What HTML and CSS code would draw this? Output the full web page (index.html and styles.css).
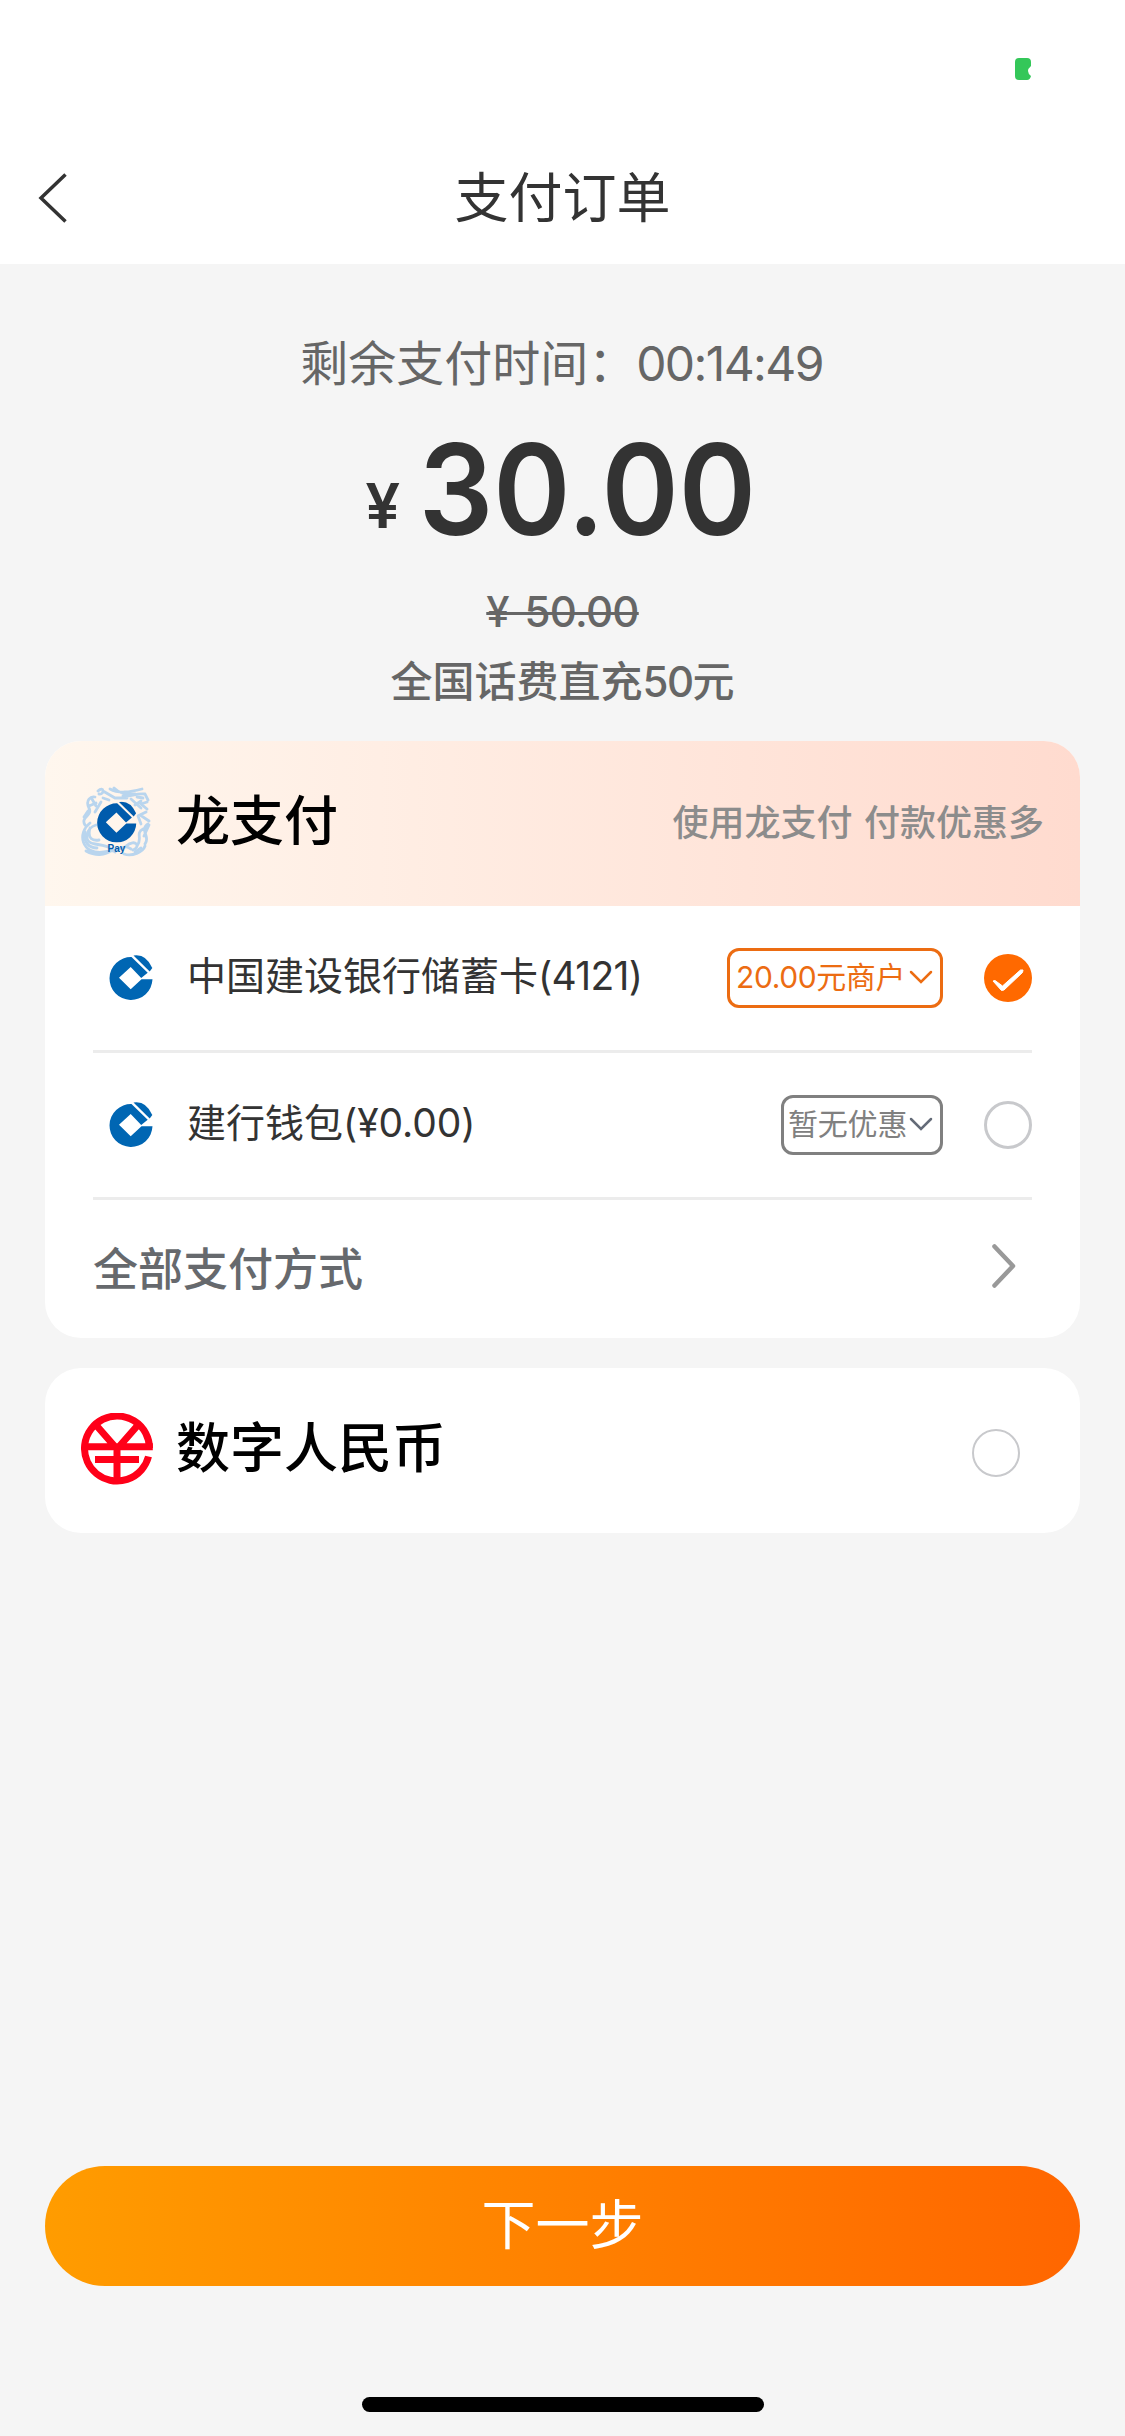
FILE: index.html
```html
<!DOCTYPE html>
<html lang="zh-CN">
<head>
<meta charset="utf-8">
<title>支付订单</title>
<link rel="stylesheet" href="styles.css">
</head>
<body>
<svg width="0" height="0" class="defs">
  <symbol id="ccb" viewBox="0 0 44 45">
    <path d="M22.500 2 38.700 17.700 32.200 23 21.700 12 10 22.700 21.700 34.300 32.500 24.300H43.500A21.500 21.500 0 1 1 22.500 2Z"/>
    <path d="M24.500 .5Q37-1.500 43.300 13L40.700 16.500Z"/>
  </symbol>
</svg>
<main class="screen">
  <header class="top">
    <div class="status">
      <svg width="16" height="22" viewBox="0 0 16 22"><path fill="#34c759" d="M4 0H12Q16 0 16 4V8Q10 13 16 18Q15 22 12 22H4Q0 22 0 18V4Q0 0 4 0Z"/></svg>
    </div>
    <nav class="nav">
      <svg class="back" width="30" height="50" viewBox="0 0 30 50"><path d="M27.500 1.500 3 25 27.500 48.500" fill="none" stroke="#333" stroke-width="3.500"/></svg>
      <h1>支付订单</h1>
    </nav>
  </header>
  <section class="summary">
    <p class="timer">剩余支付时间：<span class="clock">00:14:49</span></p>
    <p class="price"><span class="yen">¥</span><span class="amount">30.00</span></p>
    <p class="old"><span>¥ 50.00</span></p>
    <p class="goods">全国话费直充<span class="num">50</span>元</p>
  </section>
  <section class="card">
    <div class="head promo">
      <svg class="logo" width="72" height="72" viewBox="0 0 72 72">
        <g fill="none" stroke="#b9d5ee" stroke-width="2.800" stroke-linecap="round">
          <path d="M4 39C-1 31 12 30 8 22S10 10 14 11M7 25 3 31M17 5C23-1 24 9 18 8M22 5 34 12H46M29 3C38 8 49 6 61 3M33 2C38 7 45 9 54 8M42 10C50 11 54 7 64 8L67 14M60 15 54 19M66 16 60 18 66 23M65 26 59 29 68 35M67 38C58 44 70 51 64 58M68 39 63 50M9 37C-4 47 0 69 23 66S42 58 50 63M15 39C5 42 1 56 14 58S28 61 34 66M9 42C6 53 12 55 18 54M45 60C55 52 60 61 52 64M43 68C51 71 62 66 64 60M11 13 15 20M15 17 8 20M5 65C14 70 24 70 31 64M56 60C62 53 54 47 62 43"/>
          <path d="M4 46C2 56 8 62 16 62M50 13 60 22M57 30 60 38M22 12 28 14M56 11 62 12M54 66 60 62M20 16 14 26"/>
        </g>
        <g class="ccb-deep" transform="translate(15.700 15.500) scale(.91)"><use href="#ccb" width="44" height="45"/></g>
        <text x="26.500" y="66" class="pay">Pay</text>
      </svg>
      <h2>龙支付</h2>
      <span class="hint">使用龙支付 付款优惠多</span>
    </div>
    <div class="rows">
      <div class="row">
        <svg class="bank" width="44" height="45"><use href="#ccb"/></svg>
        <span class="name">中国建设银行储蓄卡<span class="digits">(4121)</span></span>
        <span class="tag hot">20.00元商户<svg width="24" height="14" viewBox="0 0 24 14"><path d="M2 2 12 12 22 2"/></svg></span>
        <svg class="radio" width="48" height="48" viewBox="0 0 48 48"><circle cx="24" cy="24" r="24" fill="#ff6900"/><path d="M9 27 11 26.500 18.500 32 36.500 16 39 16 38.500 18.500 20 36 17.500 36.500Z" fill="#fff" stroke="#fff" stroke-linejoin="round"/></svg>
      </div>
      <div class="row">
        <svg class="bank" width="44" height="45"><use href="#ccb"/></svg>
        <span class="name">建行钱包<span class="digits wallet">(¥0.00)</span></span>
        <span class="tag none">暂无优惠<svg width="24" height="14" viewBox="0 0 24 14"><path d="M2 2 12 12 22 2"/></svg></span>
        <i class="radio empty"></i>
      </div>
      <div class="row all">
        <span>全部支付方式</span>
        <svg width="24" height="44" viewBox="0 0 24 44"><path d="M2.500 2.500 21 22 2.500 41.500" fill="none" stroke="#999" stroke-width="4.500" stroke-linecap="round" stroke-linejoin="round"/></svg>
      </div>
    </div>
  </section>
  <section class="card">
    <div class="head ecny">
      <svg class="logo" width="72" height="72" viewBox="0 0 72 72">
        <g fill="none" stroke="#ff0019" stroke-width="7">
          <path d="M68.500 35A32.500 32.500 0 1 0 67.500 43.500"/>
          <path d="M15 12 36 36 57 12M36 31V70M4 33.700H71.800M14 46.500H58"/>
        </g>
      </svg>
      <h2>数字人民币</h2>
      <i class="radio empty thin"></i>
    </div>
  </section>
  <footer class="bottom">
    <button class="next">下一步</button>
    <div class="home"></div>
  </footer>
</main>
</body>
</html>
```
FILE: styles.css
```css
* { box-sizing: border-box; margin: 0; padding: 0; }
body {
  background: #f5f5f5;
  color: #333;
  font-family: Inter, "Noto Sans CJK SC", sans-serif;
}
svg { display: block; flex: none; }
.defs { position: absolute; }
.screen { display: flex; flex-direction: column; width: 1125px; height: 2436px; }

.top { height: 264px; background: #fff; }
.status { height: 132px; padding: 58px 94px 0 0; display: flex; justify-content: flex-end; }
.nav { height: 132px; padding: 0 38px; display: grid; grid-template-columns: 30px 1fr 30px; align-items: center; }
.nav h1 { padding-top: 2px; font-size: 54px; line-height: 80px; font-weight: 400; text-align: center; }

.summary { height: 477px; padding-top: 64px; text-align: center; color: #666; }
.timer { height: 72px; padding-right: 2px; font-size: 48px; line-height: 72px; }
.clock { letter-spacing: -1.6px; }
.price { height: 150px; margin-top: 14px; padding-right: 4px; line-height: 150px; color: #333; font-weight: 600; display: flex; justify-content: center; align-items: baseline; gap: 19px; }
.yen { font-size: 62px; transform: translateY(-7px); }
.amount { margin: 0 -13px; font-size: 126px; font-weight: 560; transform: scaleX(.93); }
.old { height: 60px; margin-top: 18px; font-size: 42px; line-height: 60px; font-weight: 500; }
.old span { letter-spacing: -.7px; word-spacing: 5px; text-decoration: line-through; text-decoration-thickness: 3px; }
.goods { height: 60px; margin-top: 10px; font-size: 42px; line-height: 60px; font-weight: 500; }
.num { letter-spacing: -1.5px; }

.card { margin: 0 45px 30px; background: #fff; border-radius: 36px; overflow: hidden; }
.head { height: 165px; padding: 0 36px; display: flex; align-items: center; }
.promo { padding-bottom: 3px; background: linear-gradient(to right, #fff7ee, #ffdbcf); }
.ecny { padding-bottom: 3px; }
.head h2 { flex: 1; margin-left: 23px; font-size: 54px; font-weight: 500; color: #000; line-height: 80px; }
.hint { padding-bottom: 4px; font-size: 36px; font-weight: 500; color: #8c8c8c; word-spacing: 2px; }
.ccb-deep { fill: #005bac; }
.pay { font: bold 10px "Liberation Sans", sans-serif; fill: #005bac; }

.rows { padding: 0 48px; }
.row { height: 147px; display: flex; align-items: center; border-bottom: 3px solid #ececec; }
.bank { margin: 0 0 2px 16px; fill: #0066b3; }
.name { flex: 1; margin-left: 34px; padding-bottom: 4px; font-size: 39px; line-height: 58px; }
.digits { letter-spacing: -.7px; }
.wallet { letter-spacing: -.1px; }
.tag { height: 60px; padding: 0 7px 3px 6px; border: 3px solid; border-radius: 12px; display: flex; align-items: center; justify-content: space-between; font-size: 30px; line-height: 44px; white-space: nowrap; }
.tag path { fill: none; stroke: currentColor; stroke-width: 2.5; stroke-linecap: round; }
.hot { color: #ec6c12; width: 216px; letter-spacing: -.4px; }
.none { color: #808080; width: 162px; padding-left: 4px; letter-spacing: -.2px; }
.none path { stroke: #646b78; }
.radio { flex: none; width: 48px; height: 48px; margin-left: 41px; }
.empty { border: 3px solid #c8c9cc; border-radius: 50%; }
.thin { border-width: 2px; margin: 8px 24px 0 0; }
.all { height: 138px; border: 0; justify-content: space-between; padding: 0 16px 6px 0; font-size: 45px; font-weight: 500; color: #66696d; }

.bottom { margin-top: auto; display: flex; flex-direction: column; align-items: center; padding: 0 45px 24px; }
.next { width: 100%; height: 120px; border: 0; border-radius: 60px; background: linear-gradient(to right, #ff9c00, #ff6600); color: #fff; font: 400 54px/80px Inter, "Noto Sans CJK SC", sans-serif; }
.home { width: 402px; height: 15px; margin-top: 111px; border-radius: 8px; background: #000; }
```
